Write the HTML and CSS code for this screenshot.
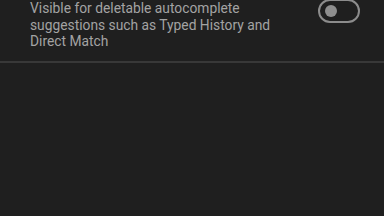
FILE: index.html
```html
<!DOCTYPE html>
<html lang="en">
<head>
    <meta charset="UTF-8">
    <title>Settings</title>
    <link rel="stylesheet" href="styles.css">
</head>
<body>
    <div class="pref-row">
        <div class="pref-text">
            Visible for deletable autocomplete suggestions such as Typed History and Direct Match
        </div>
        <div class="toggle">
            <span class="knob"></span>
        </div>
    </div>
</body>
</html>
```

FILE: styles.css
```css
/* General styles */
body {
    margin: 0;
    padding: 0;
    height: 216px;
    overflow: hidden;
    background-color: #1f1f1f;
    font-family: Roboto, "Noto Sans", sans-serif;
}

/* Preference row */
.pref-row {
    display: flex;
    align-items: flex-start;
    justify-content: space-between;
    padding: 0 24px 11px 30px;
    border-bottom: 2px solid #383838;
}

.pref-text {
    width: 260px;
    font-size: 13.8px;
    line-height: 16.5px;
    color: #a3a3a3;
}

/* Switch, off state */
.toggle {
    box-sizing: border-box;
    width: 42px;
    height: 24px;
    margin-top: -1px;
    border: 2px solid #8c8c8c;
    border-radius: 12px;
    display: flex;
    align-items: center;
    padding-left: 5px;
}

.knob {
    width: 12px;
    height: 12px;
    border-radius: 50%;
    background-color: #8e8e8e;
}
```
